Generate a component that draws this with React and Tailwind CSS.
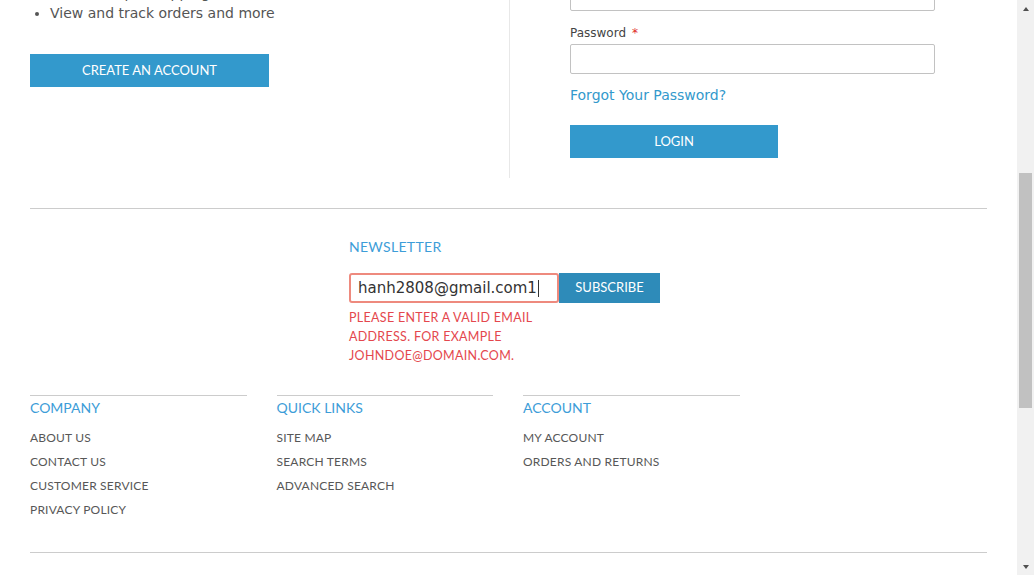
const companyLinks = ['About Us', 'Contact Us', 'Customer Service', 'Privacy Policy'];
const quickLinks = ['Site Map', 'Search Terms', 'Advanced Search'];
const accountLinks = ['My Account', 'Orders and Returns'];

const FooterColumn = ({ title, links }) => (
  <div className="w-[246.5px] pr-[30px]">
    <div className="border-t border-[#cccccc] pt-[2px]">
      <h4 className="text-[14px] leading-[20px] uppercase text-[#3d9dd8]">{title}</h4>
      <ul className="mt-[8px]">
        {links.map((link) => (
          <li key={link} className="text-[12px] leading-[24px] tracking-[0.2px] uppercase text-[#575757]">
            {link}
          </li>
        ))}
      </ul>
    </div>
  </div>
);

const Scrollbar = () => (
  <div className="flex w-[17px] flex-col bg-[#f1f1f1]">
    <div className="flex h-[17px] items-center justify-center">
      <div className="h-0 w-0 border-x-[3.5px] border-b-[4px] border-x-transparent border-b-[#505050]" />
    </div>
    <div className="mx-[2px] mt-[156px] h-[235px] bg-[#c1c1c1]" />
    <div className="flex-1" />
    <div className="flex h-[17px] items-center justify-center">
      <div className="h-0 w-0 border-x-[3.5px] border-t-[4px] border-x-transparent border-t-[#505050]" />
    </div>
  </div>
);

const App = () => {
  return (
    <div className="flex h-[575px] w-[1034px] overflow-hidden bg-white font-['Lato',sans-serif]">
      <main className="flex-1 overflow-hidden px-[30px]">
        {/* login / create account */}
        <div className="flex h-[178px]">
          <div className="-mt-[17px] w-[479px]">
            <ul className="list-disc pl-[20px] font-['DejaVu_Sans',Verdana,sans-serif] text-[14px] leading-[20px] text-[#555555]">
              <li>Save multiple shipping addresses</li>
              <li>View and track orders and more</li>
            </ul>
            <button className="mt-[31px] h-[33px] w-[239px] bg-[#3399cc] text-[13px] uppercase text-white">
              Create an Account
            </button>
          </div>

          <div className="flex-1 border-l border-[#e8e8e8] pl-[60px]">
            <div className="-mt-[21px] h-[32px] w-[365px] rounded-[2px] border border-[#c2c2c2]" />
            <label className="mt-[13px] mb-[2px] block font-['DejaVu_Sans',Verdana,sans-serif] text-[12px] leading-[18px] text-[#444444]">
              Password<span className="ml-[6px] text-[#e02b27]">*</span>
            </label>
            <div className="h-[30px] w-[365px] rounded-[2px] border border-[#c2c2c2]" />
            <a className="mt-[11px] block font-['DejaVu_Sans',Verdana,sans-serif] text-[14px] leading-[20px] text-[#3399cc]">
              Forgot Your Password?
            </a>
            <button className="mt-[20px] h-[33px] w-[208px] bg-[#3399cc] text-[13px] uppercase text-white">
              Login
            </button>
          </div>
        </div>

        <div className="mt-[30px] border-t border-[#cccccc]" />

        {/* newsletter */}
        <div className="pl-[319px]">
          <h4 className="mt-[28px] text-[14px] leading-[20px] tracking-[0.3px] uppercase text-[#3d9dd8]">
            Newsletter
          </h4>
          <div className="mt-[16px] flex h-[30px]">
            <div className="flex h-[30px] w-[210px] items-center rounded-[3px] border-2 border-[#ee8a7e] pl-[7px] font-['DejaVu_Sans',Verdana,sans-serif] text-[15px] leading-[26px] text-[#333333]">
              hanh2808@gmail.com1
              <span className="ml-[1px] h-[17px] w-[1px] bg-[#333333]" />
            </div>
            <button className="h-[30px] w-[101px] bg-[#2e8bb9] text-[13px] uppercase text-white">Subscribe</button>
          </div>
          <p className="mt-[5px] w-[200px] text-[12.5px] leading-[19px] tracking-[0.3px] uppercase text-[#e4474d]">
            Please enter a valid email address. For example johndoe@domain.com.
          </p>
        </div>

        {/* footer links */}
        <div className="mt-[30px] flex h-[157px]">
          <FooterColumn title="Company" links={companyLinks} />
          <FooterColumn title="Quick Links" links={quickLinks} />
          <FooterColumn title="Account" links={accountLinks} />
        </div>

        <div className="border-t border-[#cccccc]" />
      </main>
      <Scrollbar />
    </div>
  );
};

export default App;
